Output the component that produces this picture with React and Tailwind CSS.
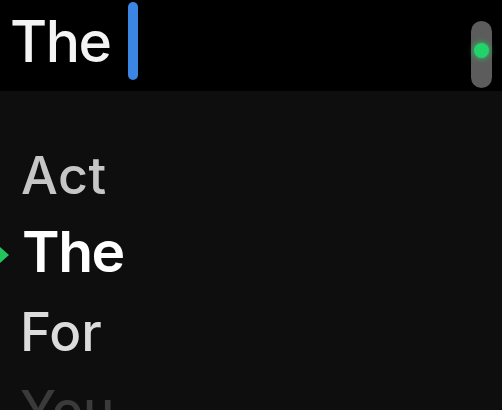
export default function App() {
  const font = { fontFamily: 'Inter, "Liberation Sans", Arial, sans-serif' };
  return (
    <div className="w-[502px] h-[410px] overflow-hidden bg-[#0e0e0e] flex flex-col" style={font}>
      <div className="h-[91px] shrink-0 bg-black flex items-start">
        <div className="pl-[10px] mt-[12px] text-[57px] leading-[60px] font-medium tracking-[-1.5px] text-[#f4f4f4]">The</div>
        <div className="ml-[18px] mt-[2px] w-[10px] h-[78px] rounded-full bg-[#3b86e2]"></div>
        <div className="ml-auto mr-[10px] mt-[21px] w-[21px] h-[67px] rounded-full bg-[#5c5c5c] flex justify-center pt-[22px]">
          <div className="w-[15px] h-[15px] rounded-full bg-[#22d36a] shadow-[0_0_6px_#22d36a]"></div>
        </div>
      </div>
      <div className="pt-[46px] flex flex-col">
        <div className="h-[76px] flex items-start">
          <div className="w-[21px] shrink-0"></div>
          <div className="text-[52px] leading-[78px] font-medium tracking-[0.5px] text-[#c6c6c6]">Act</div>
        </div>
        <div className="h-[80px] flex items-start">
          <div className="w-[22px] shrink-0 h-[78px] flex items-center">
            <svg width="9" height="16" viewBox="0 0 9 16" className="mt-[6px]">
              <path d="M0 0 L9 8 L0 16 Z" fill="#22c55e" />
            </svg>
          </div>
          <div className="text-[57px] leading-[78px] font-semibold tracking-[-1.5px] text-white">The</div>
        </div>
        <div className="h-[78px] flex items-start">
          <div className="w-[20px] shrink-0"></div>
          <div className="text-[53px] leading-[78px] font-medium tracking-[0px] text-[#dcdcdc]">For</div>
        </div>
        <div className="h-[78px] flex items-start">
          <div className="w-[20px] shrink-0"></div>
          <div className="text-[52px] leading-[78px] font-medium text-[#3a3a3a]">You</div>
        </div>
      </div>
    </div>
  );
}
